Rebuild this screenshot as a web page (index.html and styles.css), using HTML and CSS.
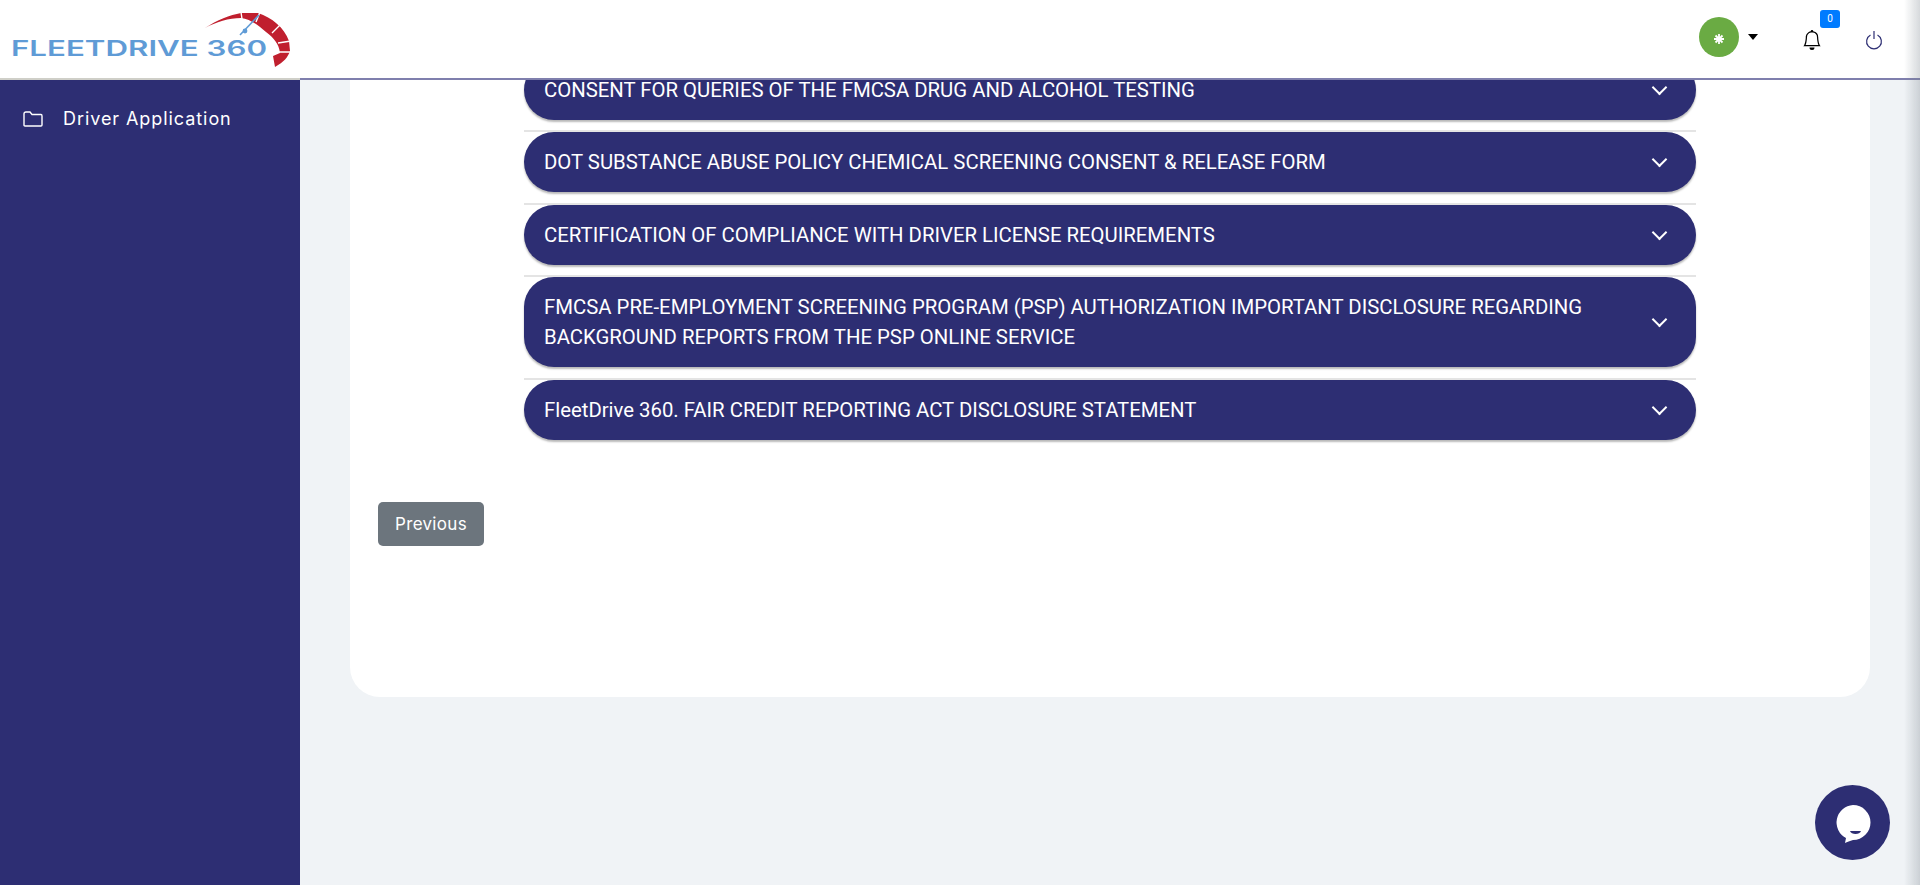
FILE: index.html
```html
<!DOCTYPE html>
<html lang="en">

<head>
    <meta charset="UTF-8">
    <meta name="viewport" content="width=device-width, initial-scale=1.0">
    <title>FleetDrive 360</title>
    <link rel="stylesheet" href="styles.css">
</head>

<body>
    <!-- Top bar -->
    <header class="topbar">
        <div class="brand">
            <svg class="brand-logo" width="300" height="78" viewBox="0 0 300 78">
                <text class="brand-text" x="11" y="56" textLength="256" lengthAdjust="spacingAndGlyphs">FLEETDRIVE 360</text>
                <path class="gauge" d="M205 28 C217 20 230 15 241 13 L258 13 C272 18 284 27 289 41 L290 51 C288 57 284 62 275 67 L273 56 L280 53 C279 44 274 38 266 32 C258 25 250 19 241 18 C229 18 216 22 205 28 Z" />
                <path class="gauge-gap" d="M241 12 L242 19 M260 12 L256 22 M281 24 L272 33 M291 41 L278 43 M290 52 L276 52" />
                <path class="needle" d="M240 35 L259 15" />
                <circle class="needle-hub" cx="245" cy="31" r="2.4" />
            </svg>
        </div>
        <div class="topbar-right">
            <div class="user-menu">
                <span class="avatar">
                    <svg width="12" height="12" viewBox="0 0 12 12">
                        <path d="M6 1 V11 M1 6 H11 M2.5 2.5 L9.5 9.5 M9.5 2.5 L2.5 9.5" />
                    </svg>
                </span>
                <span class="caret"></span>
            </div>
            <div class="bell">
                <svg width="20" height="20" viewBox="0 0 16 16">
                    <path d="M8 16a2 2 0 0 0 2-2H6a2 2 0 0 0 2 2zM8 1.918l-.797.161A4.002 4.002 0 0 0 4 6c0 .628-.134 2.197-.459 3.742-.16.767-.376 1.566-.663 2.258h10.244c-.287-.692-.502-1.49-.663-2.258C12.134 8.197 12 6.628 12 6a4.002 4.002 0 0 0-3.203-3.92L8 1.917zM14.22 12c.223.447.481.801.78 1H1c.299-.199.557-.553.78-1C2.68 10.2 3 6.88 3 6c0-2.42 1.72-4.44 4.005-4.901a1 1 0 1 1 1.99 0A5.002 5.002 0 0 1 13 6c0 .88.32 4.2 1.22 6z" />
                </svg>
                <span class="badge">0</span>
            </div>
            <svg class="power" width="18" height="20" viewBox="0 0 18 20">
                <path d="M5.5 5 A7.4 7.4 0 1 0 12.5 5 M9 1 V9" />
            </svg>
        </div>
    </header>

    <div class="layout">
        <!-- Side menu -->
        <nav class="sidebar">
            <a class="side-link" href="#">
                <svg width="20" height="16" viewBox="0 0 20 16">
                    <path d="M1 3 Q1 1 3 1 H7 L9 3.5 H18 Q19 3.5 19 5 V14 Q19 15 18 15 H2 Q1 15 1 14 Z" />
                </svg>
                Driver Application
            </a>
        </nav>

        <main class="content">
            <div class="card">
                <div class="accordion">
                    <div class="acc-item">
                        <button class="acc-btn"><span>CONSENT FOR QUERIES OF THE FMCSA DRUG AND ALCOHOL TESTING</span><i class="chev"></i></button>
                    </div>
                    <div class="acc-item">
                        <button class="acc-btn"><span>DOT SUBSTANCE ABUSE POLICY CHEMICAL SCREENING CONSENT &amp; RELEASE FORM</span><i class="chev"></i></button>
                    </div>
                    <div class="acc-item">
                        <button class="acc-btn"><span>CERTIFICATION OF COMPLIANCE WITH DRIVER LICENSE REQUIREMENTS</span><i class="chev"></i></button>
                    </div>
                    <div class="acc-item">
                        <button class="acc-btn"><span>FMCSA PRE-EMPLOYMENT SCREENING PROGRAM (PSP) AUTHORIZATION IMPORTANT DISCLOSURE REGARDING BACKGROUND REPORTS FROM THE PSP ONLINE SERVICE</span><i class="chev"></i></button>
                    </div>
                    <div class="acc-item last">
                        <button class="acc-btn"><span>FleetDrive 360. FAIR CREDIT REPORTING ACT DISCLOSURE STATEMENT</span><i class="chev"></i></button>
                    </div>
                </div>
                <button class="btn-prev">Previous</button>
            </div>
        </main>
    </div>

    <!-- Chat launcher -->
    <div class="chat">
        <svg width="42" height="42" viewBox="0 0 42 42">
            <path class="chat-bubble" d="M21 3 A17.5 17.5 0 0 1 21 38 C18 39 15 40 13 41 L14 36 A17.5 17.5 0 0 1 21 3 Z" />
            <path class="chat-smile" d="M18 29 H29 C28 33 19 33 18 29 Z" />
        </svg>
    </div>
</body>

</html>
```

FILE: styles.css
```css
/* Basic Reset and General Styling */
* {
    margin: 0;
    padding: 0;
    box-sizing: border-box;
}

body {
    background-color: #f0f3f6;
    height: 100vh;
    overflow: hidden;
    font-family: 'Roboto', sans-serif;
    display: flex;
    flex-direction: column;
}

/* soft shadow on the right edge of the window */
body::after {
    content: "";
    position: fixed;
    top: 0;
    right: 0;
    bottom: 0;
    width: 16px;
    background: linear-gradient(to right, rgba(120, 130, 140, 0), rgba(120, 130, 140, 0.3));
    pointer-events: none;
}

/* Top bar */
.topbar {
    height: 80px;
    flex-shrink: 0;
    display: flex;
    justify-content: space-between;
    background: #fff;
    border-bottom: 2px solid #7f7fad;
}

.brand {
    width: 300px;
    height: 80px;
    border-bottom: 2px solid #cfcfc8;
}

.brand-logo {
    display: block;
}

.brand-text {
    font-family: 'Inter', sans-serif;
    font-weight: 600;
    font-size: 21px;
    fill: #5f9bd6;
}

.gauge {
    fill: #c01f2e;
}

.gauge-gap {
    fill: none;
    stroke: #fff;
    stroke-width: 1.4;
}

.needle {
    fill: none;
    stroke: #5f9bd6;
    stroke-width: 1.6;
}

.needle-hub {
    fill: #5f9bd6;
}

.topbar-right {
    display: flex;
    align-items: center;
    padding-right: 37px;
}

.user-menu {
    display: flex;
    align-items: center;
    gap: 9px;
    margin-right: 44px;
    margin-top: -4px;
}

.avatar {
    width: 40px;
    height: 40px;
    border-radius: 50%;
    background: #6aab43;
    display: flex;
    align-items: center;
    justify-content: center;
    padding-top: 3px;
}

.avatar path {
    fill: none;
    stroke: #fff;
    stroke-width: 1.8;
}

.caret {
    width: 0;
    height: 0;
    border-left: 5.5px solid transparent;
    border-right: 5.5px solid transparent;
    border-top: 6px solid #000;
}

.bell {
    position: relative;
    width: 20px;
    height: 20px;
    margin-right: 43px;
    margin-top: 2px;
}

.bell svg {
    display: block;
}

.badge {
    position: absolute;
    left: 18px;
    top: -20px;
    width: 20px;
    height: 18px;
    border-radius: 3px;
    background: #007bff;
    color: #fff;
    font-size: 10px;
    line-height: 18px;
    text-align: center;
}

.power {
    margin-top: 2px;
}

.power path {
    fill: none;
    stroke: #2d2e73;
    stroke-width: 1.2;
}

/* Layout */
.layout {
    flex: 1;
    display: flex;
    min-height: 0;
}

.sidebar {
    width: 300px;
    flex-shrink: 0;
    background: #2d2e73;
    padding-top: 26px;
}

.side-link {
    display: flex;
    align-items: center;
    gap: 20px;
    padding-left: 23px;
    color: #fff;
    font-family: 'Inter', sans-serif;
    font-size: 18px;
    letter-spacing: 0.93px;
    line-height: 26px;
    text-decoration: none;
}

.side-link path {
    fill: none;
    stroke: #fff;
    stroke-width: 1.4;
}

.content {
    flex: 1;
    overflow: hidden;
    padding: 0 50px;
}

/* Card: scrolled up under the top bar */
.card {
    background: #fff;
    height: 637.25px;
    padding: 0 28px;
    border-radius: 0 0 30px 30px;
}

.accordion {
    margin: -20.25px 146px 0;
}

.acc-item {
    padding-bottom: 10.5px;
    border-bottom: 2px solid #e4e4e4;
}

.acc-item.last {
    padding-bottom: 0;
    border-bottom: none;
}

.acc-btn {
    width: 100%;
    display: flex;
    align-items: center;
    justify-content: space-between;
    padding: 15px 30px 15px 20px;
    border: none;
    border-radius: 30px;
    background: #2d2e73;
    box-shadow: 0 2px 2px rgba(0, 0, 0, 0.28);
    color: #fff;
    font-family: 'Roboto', sans-serif;
    font-size: 20.33px;
    font-weight: 400;
    line-height: 30px;
    text-align: left;
}

.acc-btn span {
    max-width: 1060px;
}

.chev {
    flex-shrink: 0;
    width: 11px;
    height: 11px;
    margin-right: 1px;
    margin-top: -5px;
    border-right: 2.4px solid #fff;
    border-bottom: 2.4px solid #fff;
    transform: rotate(45deg);
}

.btn-prev {
    display: block;
    width: 106px;
    height: 44px;
    margin-top: 62px;
    border: none;
    border-radius: 5px;
    background: #6c757d;
    color: #fff;
    font-family: 'Inter', sans-serif;
    font-size: 17px;
    letter-spacing: 0.3px;
}

/* Chat launcher */
.chat {
    position: fixed;
    left: 1815px;
    top: 785px;
    width: 75px;
    height: 75px;
    border-radius: 50%;
    background: #2d2e73;
    display: flex;
    align-items: center;
    justify-content: center;
}

.chat-bubble {
    fill: #fff;
}

.chat-smile {
    fill: #2d2e73;
}
```
